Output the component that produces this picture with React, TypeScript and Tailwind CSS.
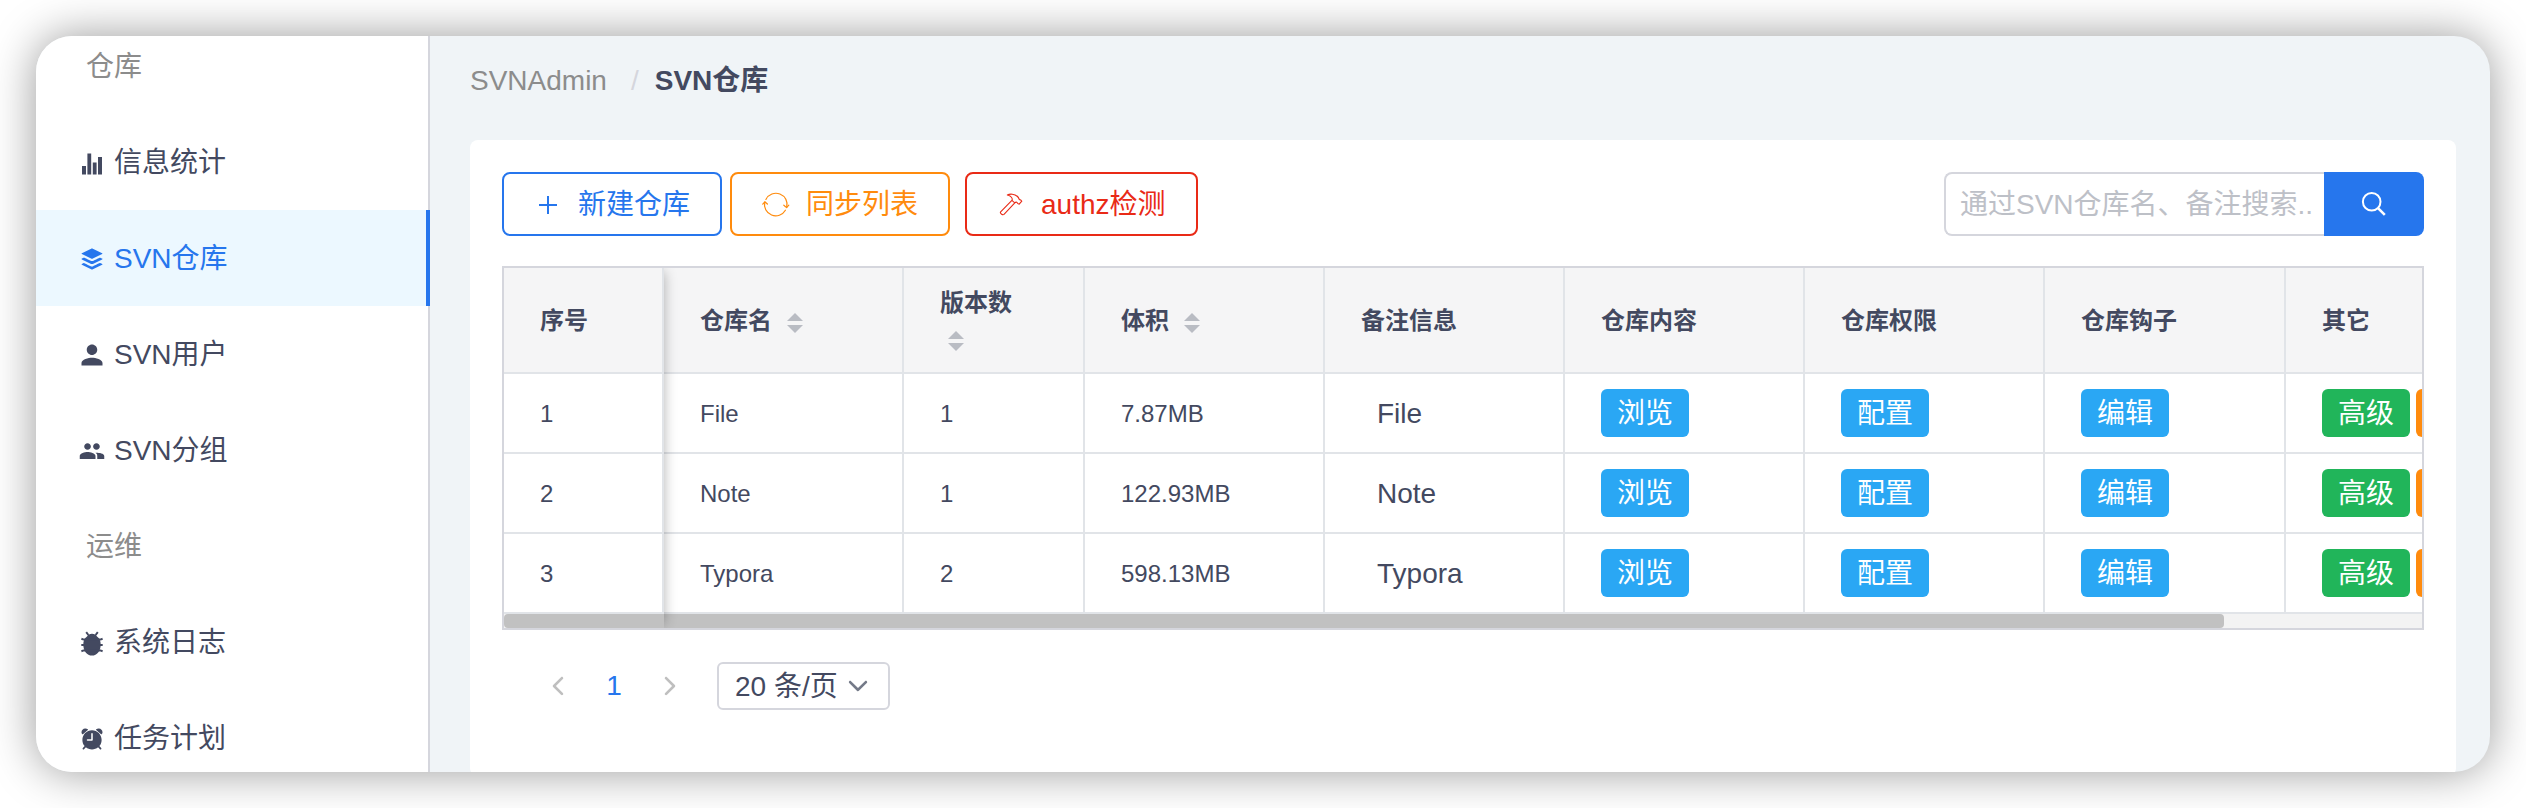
import type { ComponentType, ReactNode } from "react";
import {
  IoLogoBuffer,
  IoMdPerson,
  IoMdPeople,
  IoIosAlarm,
  IoIosArrowBack,
  IoIosArrowForward,
  IoIosArrowDown,
} from "react-icons/io";

type IconProps = { className?: string };

type MenuEntry = {
  label: string;
  icon?: ComponentType<IconProps>;
  active?: boolean;
};

function StatsIcon({ className }: IconProps) {
  return (
    <svg viewBox="0 0 28 28" className={className} fill="currentColor" aria-hidden="true">
      <path d="M4 17h4v8.4H4zM9.4 4.6h3.8v20.8H9.4zM14.8 13.6h3.8v11.8h-3.8zM20 8h4v17.4h-4z" />
    </svg>
  );
}

function BugIcon({ className }: IconProps) {
  return (
    <svg viewBox="0 0 28 28" className={className} fill="currentColor" aria-hidden="true">
      <path d="M14 4.8c2.4 0 4 .8 5 2.600 2.600 1.800 3.700 4.600 3.700 8.100C22.700 21.800 19 26.600 14 26.600S5.300 21.800 5.300 15.500c0-3.500 1.100-6.300 3.700-8.100 1-1.800 2.600-2.600 5-2.600z" />
      <path
        d="M8.200 3.200 10.400 6M19.800 3.200 17.600 6M3.400 9.800 5.600 10.600H22.400L24.600 9.800M3.300 16H24.700M3.400 22.200 5.600 21.400H22.400L24.600 22.200"
        fill="none"
        stroke="currentColor"
        strokeWidth="2"
      />
    </svg>
  );
}

const menu: MenuEntry[] = [
  { label: "仓库" },
  { label: "信息统计", icon: StatsIcon },
  { label: "SVN仓库", icon: IoLogoBuffer, active: true },
  { label: "SVN用户", icon: IoMdPerson },
  { label: "SVN分组", icon: IoMdPeople },
  { label: "运维" },
  { label: "系统日志", icon: BugIcon },
  { label: "任务计划", icon: IoIosAlarm },
];

const repositories = [
  { id: 1, name: "File", revision: 1, size: "7.87MB", note: "File" },
  { id: 2, name: "Note", revision: 1, size: "122.93MB", note: "Note" },
  { id: 3, name: "Typora", revision: 2, size: "598.13MB", note: "Typora" },
];

const columns = [
  { title: "序号", width: "w-[160px]" },
  { title: "仓库名", width: "w-[240px]", sortable: true },
  { title: "版本数", width: "w-[181px]", sortable: true },
  { title: "体积", width: "w-[240px]", sortable: true },
  { title: "备注信息", width: "w-[240px]" },
  { title: "仓库内容", width: "w-[240px]" },
  { title: "仓库权限", width: "w-[240px]" },
  { title: "仓库钩子", width: "w-[241px]" },
  { title: "其它", width: "w-[360px]" },
];

function PlusIcon() {
  return (
    <svg viewBox="0 0 28 28" className="size-7" fill="none" stroke="currentColor" strokeWidth="2" aria-hidden="true">
      <path d="M5 15H23M14 6V24" />
    </svg>
  );
}

function SearchIcon() {
  return (
    <svg viewBox="0 0 28 28" className="size-7" fill="none" stroke="currentColor" strokeWidth="2" aria-hidden="true">
      <circle cx="11.700" cy="11.700" r="8.800" />
      <path d="M17.800 17.800 24.800 24.800" strokeWidth="2.600" />
    </svg>
  );
}

function SyncIcon() {
  return (
    <svg viewBox="0 0 28 28" className="size-7" fill="none" stroke="currentColor" strokeWidth="1.2" strokeLinecap="round" strokeLinejoin="round" aria-hidden="true">
      <path d="M3.900 9.400A11.200 11.200 0 0 1 24.700 17.400" />
      <path d="M23.400 20.200A11.200 11.200 0 0 1 2.800 12" />
      <path d="M.8 14.200 2.800 11.800 5.400 14" />
      <path d="M21.800 15.200 24.600 17.600 26.800 15.200" />
    </svg>
  );
}

function HammerIcon() {
  return (
    <svg viewBox="0 0 28 28" className="size-7" fill="none" stroke="currentColor" strokeWidth="1.1" strokeLinejoin="round" aria-hidden="true">
      <path d="M10.300 5C13 3.600 17.500 3.800 20.500 6.500C22 8 21.900 9 22.500 9.600C23.300 9.600 24.300 10.300 24.800 11.200L22.200 14.200C21 13.900 20.300 13 19.800 12.200C19 12 18.300 12.300 17.800 12.800L7 24.400C5.800 25.400 3 23.600 3.400 22.200L14.900 10.400C16 8.600 14 5.600 10.300 5Z" />
      <path d="M14.900 10.400 17.800 12.800" />
    </svg>
  );
}

function SortIcon() {
  return (
    <svg viewBox="0 0 16 20" className="mx-2 inline-block h-5 w-4 align-middle" fill="#b9bcc3" aria-hidden="true">
      <path d="M8 0 16 8H0ZM0 12H16L8 20Z" />
    </svg>
  );
}

function Sidebar() {
  return (
    <aside className="w-[394px] shrink-0 overflow-hidden bg-white">
      <nav className="-mt-[18px]">
        {menu.map(({ label, icon: Icon, active }) =>
          Icon ? (
            <a
              key={label}
              href="#"
              className={
                active
                  ? "flex h-24 items-center gap-2 border-r-4 border-[#2676ed] bg-[#ecf8ff] pt-0.5 pl-[42px] text-[#2676ed]"
                  : "flex h-24 items-center gap-2 border-r-2 border-[#d5d6dd] pt-0.5 pl-[42px]"
              }
            >
              <Icon className="size-7" />
              {label}
            </a>
          ) : (
            <div key={label} className="flex h-24 items-center border-r-2 border-[#d5d6dd] pt-0.5 pl-[50px] text-[#8c8c8c]">
              {label}
            </div>
          ),
        )}
      </nav>
    </aside>
  );
}

function OutlineButton({ tone, icon, children }: { tone: string; icon: ReactNode; children: ReactNode }) {
  return (
    <button type="button" className={`flex h-16 items-center gap-4 rounded-lg border-2 bg-white px-[30px] ${tone}`}>
      {icon}
      <span className="pt-0.5">{children}</span>
    </button>
  );
}

function CellButton({ tone, children }: { tone: string; children: ReactNode }) {
  return (
    <button type="button" className={`block h-12 rounded-md px-4 pt-0.5 text-white ${tone}`}>
      {children}
    </button>
  );
}

function Toolbar() {
  return (
    <div className="flex items-center justify-between">
      <div className="flex items-center">
        <OutlineButton tone="border-[#2676ed] text-[#2676ed]" icon={<PlusIcon />}>
          新建仓库
        </OutlineButton>
        <div className="ml-2 flex gap-[15px]">
          <OutlineButton tone="border-[#ff8b0d] text-[#ff8b0d]" icon={<SyncIcon />}>
            同步列表
          </OutlineButton>
          <OutlineButton tone="border-[#e92a16] text-[#e92a16]" icon={<HammerIcon />}>
            authz检测
          </OutlineButton>
        </div>
      </div>
      <form className="flex h-16 w-[480px]" onSubmit={(e) => e.preventDefault()}>
        <input
          type="text"
          aria-label="搜索仓库"
          placeholder="通过SVN仓库名、备注搜索.."
          className="min-w-0 flex-1 rounded-l-lg border-2 border-r-0 border-[#d5d6dd] bg-white pt-0.5 pr-1 pl-3.5 outline-none placeholder:text-[#bdc0c7]"
        />
        <button type="submit" aria-label="搜索" className="flex w-[100px] items-center justify-center rounded-r-lg bg-[#2676ed] text-white">
          <SearchIcon />
        </button>
      </form>
    </div>
  );
}

function RepositoryTable() {
  const cell = "border-r-2 border-b-2 border-[#e1e4e8] px-9 text-left";
  const textCell = `${cell} pt-0.5`;
  return (
    <div className="relative mt-[30px] overflow-hidden border-2 border-[#d5d6dd]">
      <div className="overflow-hidden">
        <table className="w-[2142px] table-fixed border-separate border-spacing-0 text-2xl">
          <thead>
            <tr className="h-[106px] bg-[#f5f5f6]">
              {columns.map((c) => (
                <th key={c.title} scope="col" className={`${textCell} ${c.width} leading-9 font-bold`}>
                  {c.title}
                  {c.sortable && (
                    <>
                      {" "}
                      <SortIcon />
                    </>
                  )}
                </th>
              ))}
            </tr>
          </thead>
          <tbody>
            {repositories.map((r) => (
              <tr key={r.id} className="h-20">
                <td className={textCell}>{r.id}</td>
                <td className={textCell}>{r.name}</td>
                <td className={textCell}>{r.revision}</td>
                <td className={textCell}>{r.size}</td>
                <td className={`${textCell} text-[28px]`}>
                  <span className="pl-4">{r.note}</span>
                </td>
                <td className={`${cell} text-[28px]`}>
                  <CellButton tone="bg-[#2aa7f4]">浏览</CellButton>
                </td>
                <td className={`${cell} text-[28px]`}>
                  <CellButton tone="bg-[#2aa7f4]">配置</CellButton>
                </td>
                <td className={`${cell} text-[28px]`}>
                  <CellButton tone="bg-[#2aa7f4]">编辑</CellButton>
                </td>
                <td className={`${cell} text-[28px]`}>
                  <div className="flex gap-1.5">
                    <CellButton tone="bg-[#21b55a]">高级</CellButton>
                    <button type="button" aria-label="更多操作" className="h-12 w-[88px] rounded-md bg-[#ff8b0d]" />
                  </div>
                </td>
              </tr>
            ))}
          </tbody>
        </table>
      </div>
      <div className="h-3.5 bg-[#f3f3f3]">
        <div className="h-full w-[89.7%] rounded-sm bg-[#c1c1c1]" />
      </div>
      <div className="pointer-events-none absolute inset-y-0 left-0 w-[160px] shadow-[4px_0_12px_-4px_rgba(0,0,0,0.3)]" />
    </div>
  );
}

function Pagination() {
  return (
    <div className="mt-8 ml-8 flex items-center gap-2">
      <button type="button" aria-label="上一页" className="flex size-12 items-center justify-center text-[#bfbfbf]">
        <IoIosArrowBack className="size-7" />
      </button>
      <button type="button" className="size-12 text-[#2676ed]">
        1
      </button>
      <button type="button" aria-label="下一页" className="flex size-12 items-center justify-center text-[#bfbfbf]">
        <IoIosArrowForward className="size-7" />
      </button>
      <div className="relative ml-[15px]">
        <select aria-label="每页条数" className="block h-12 w-[173px] appearance-none rounded-md border-2 border-[#d5d6dd] bg-white pt-0.5 pl-4 outline-none">
          <option>20 条/页</option>
        </select>
        <IoIosArrowDown className="pointer-events-none absolute top-2.5 right-[18px] size-7 text-[#747a88]" />
      </div>
    </div>
  );
}

export default function App() {
  return (
    <div className="flex h-screen bg-white p-9 font-['Liberation_Sans','Noto_Sans_CJK_SC',sans-serif] text-[28px] leading-[42px] text-[#434960]">
      <div className="flex min-w-0 flex-1 overflow-hidden rounded-[36px] bg-[#f0f4f7] shadow-[0_0_46px_rgba(0,0,0,0.4)]">
        <Sidebar />
        <main className="flex min-w-0 flex-1 flex-col pr-[34px] pl-10">
          <nav aria-label="面包屑" className="flex h-[104px] shrink-0 items-center pb-3.5">
            <a href="#" className="text-[#8c8c8c]">
              SVNAdmin
            </a>
            <span className="pr-4 pl-6 text-[#d5d6dd]">/</span>
            <span className="font-bold">SVN仓库</span>
          </nav>
          <section className="-mb-1 flex-1 rounded-lg bg-white p-8">
            <Toolbar />
            <RepositoryTable />
            <Pagination />
          </section>
        </main>
      </div>
    </div>
  );
}
